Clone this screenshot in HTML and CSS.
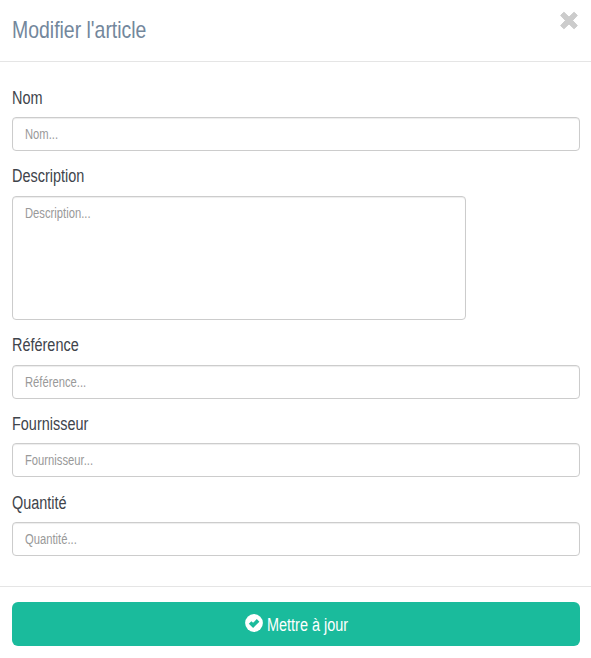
FILE: index.html
```html
<!DOCTYPE html>
<html lang="fr">
<head>
<meta charset="utf-8">
<title>Modifier l'article</title>
<link rel="stylesheet" href="styles.css">
</head>
<body>
<form class="modal">
  <header class="modal-header">
    <h1 class="title">Modifier l'article</h1>
    <button type="button" class="close" aria-label="Fermer">
      <svg width="20" height="20" viewBox="0 0 20 20"><path d="M4.9 2.2 10 7.1 15.1 2.2 18.3 5.4 13.6 10.5 18.3 15.6 15.1 18.8 10 13.9 4.9 18.8 1.7 15.6 6.4 10.5 1.7 5.4Z" fill="currentColor" stroke="currentColor" stroke-width="1" stroke-linejoin="round"/></svg>
    </button>
  </header>
  <main class="modal-body">
    <div class="group">
      <label class="label" for="nom">Nom</label>
      <div class="field"><input class="control" id="nom" placeholder="Nom..."></div>
    </div>
    <div class="group loose">
      <label class="label" for="description">Description</label>
      <div class="field area"><textarea class="control" id="description" placeholder="Description..."></textarea></div>
    </div>
    <div class="group loose">
      <label class="label" for="reference">Référence</label>
      <div class="field"><input class="control" id="reference" placeholder="Référence..."></div>
    </div>
    <div class="group">
      <label class="label" for="fournisseur">Fournisseur</label>
      <div class="field"><input class="control" id="fournisseur" placeholder="Fournisseur..."></div>
    </div>
    <div class="group last">
      <label class="label" for="quantite">Quantité</label>
      <div class="field"><input class="control" id="quantite" placeholder="Quantité..."></div>
    </div>
  </main>
  <footer class="modal-footer">
    <button type="button" class="submit">
      <svg class="check" width="18" height="18" viewBox="0 0 18 18"><circle cx="9" cy="9" r="8.9" fill="#fff"/><path d="M5.1 8.5 8.1 11.4 13.1 6.4" fill="none" stroke="#1abb9c" stroke-width="3.7"/></svg>
      <span class="submit-text">Mettre à jour</span>
    </button>
  </footer>
</form>
</body>
</html>
```

FILE: styles.css
```css
* { box-sizing: border-box; }
body { margin: 0; background: #fff; font-family: "Liberation Sans", sans-serif; color: #40444b; }
.modal { height: 658px; display: flex; flex-direction: column; }
.modal-header { height: 62px; padding: 0 12px; border-bottom: 1px solid #e5e5e5; display: flex; justify-content: space-between; align-items: flex-start; }
.title { margin: 16px 0 0; font-size: 24px; line-height: 28px; font-weight: 400; color: #73879c; transform: scaleX(.81); transform-origin: 0 0; }
.close { margin: 10px 0 0; padding: 0; border: 0; background: none; color: #ccc; height: 20px; }
.close svg, .check { display: block; }
.modal-body { height: 524px; padding: 25px 11px 0 12px; }
.group { margin-bottom: 14px; }
.label { display: block; width: max-content; font-size: 18px; line-height: 22px; margin-bottom: 8px; transform: scaleX(.803); transform-origin: 0 0; }
.loose .label { margin-bottom: 9px; }
.last { margin-top: 15px; }
.field { width: 100%; height: 34px; padding: 0 12px; border: 1px solid #ccc; border-radius: 4px; box-shadow: inset 0 1px 1px rgba(0,0,0,.075); }
.control { display: block; width: 124%; height: 100%; margin: 0; padding: 6px 0; border: 0; background: none; color: #555; font-family: inherit; font-size: 14px; line-height: 20px; resize: none; outline: 0; transform: scaleX(.802); transform-origin: 0 0; }
.control::placeholder { color: #999; opacity: 1; }
.area { width: 454px; height: 124px; }
.modal-footer { border-top: 1px solid #e5e5e5; padding: 15px 11px 12px 12px; height: 72px; }
.submit { width: 100%; height: 44px; padding: 0 0 0 233px; border: 0; border-radius: 6px; background: #1abb9c; color: #fff; font-family: inherit; font-size: 18px; display: flex; align-items: center; gap: 4px; }
.check { margin-top: -2px; }
.submit-text { margin-top: 2px; white-space: nowrap; transform: scaleX(.803); transform-origin: 0 0; }
```
